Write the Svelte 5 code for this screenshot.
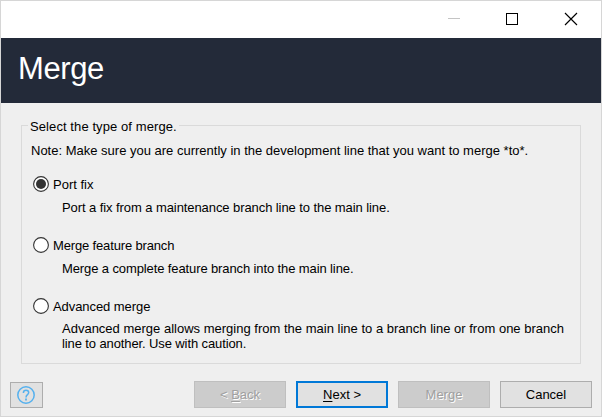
<script>
  let selected = $state('port');
  const options = [
    { id: 'port', label: 'Port fix', labelSpacing: 0, lines: [{ text: 'Port a fix from a maintenance branch line to the main line.', spacing: -0.08 }] },
    { id: 'feature', label: 'Merge feature branch', labelSpacing: -0.15, lines: [{ text: 'Merge a complete feature branch into the main line.', spacing: -0.11 }] },
    {
      id: 'advanced', label: 'Advanced merge', labelSpacing: -0.07,
      lines: [
        { text: 'Advanced merge allows merging from the main line to a branch line or from one branch', spacing: 0, justify: true },
        { text: 'line to another. Use with caution.', spacing: -0.11 }
      ]
    }
  ];
</script>

<div class="window">
  <div class="titlebar">
    <svg class="controls" width="146" height="37" viewBox="0 0 146 37" shape-rendering="crispEdges">
      <path d="M0 17.5H12" stroke="#c4c4c4" />
      <rect x="58.5" y="12.5" width="11" height="11" fill="none" stroke="#000" />
      <path d="M117 12L129 24M129 12L117 24" stroke="#000" stroke-width="1.15" shape-rendering="auto" />
    </svg>
  </div>
  <header><h1>Merge</h1></header>
  <main>
    <section class="group">
      <div class="legend-row"><span class="rule left"></span><span class="legend">Select the type of merge.</span><span class="rule"></span></div>
      <div class="body">
        <p class="note">Note: Make sure you are currently in the development line that you want to merge *to*.</p>
        {#each options as o}
          <div class="option">
            <label>
              <input type="radio" bind:group={selected} value={o.id} />
              <svg width="16" height="16" viewBox="0 0 16 16">
                <circle cx="8" cy="8" r="7.4" fill="#fff" stroke="#333" stroke-width="1.1" />
                {#if selected === o.id}<circle cx="8" cy="8" r="5" fill="#333" />{/if}
              </svg>
              <span style:letter-spacing="{o.labelSpacing}px">{o.label}</span>
            </label>
            <div class="desc" class:multi={o.lines.length > 1}>
              {#each o.lines as l}<p class:justify={l.justify} style:letter-spacing="{l.spacing}px">{l.text}</p>{/each}
            </div>
          </div>
        {/each}
      </div>
    </section>
    <footer>
      <button class="help" aria-label="Help">
        <svg width="18" height="18" viewBox="0 0 18 18" fill="none" stroke="#56b1ee">
          <circle cx="9" cy="9" r="8.2" stroke-width="1.5" />
          <path d="M6.4 6.9C6.4 5.2 7.5 4.3 9 4.3S11.7 5.2 11.7 6.6C11.7 8.6 9 8.7 9 11.4" stroke-width="1.5" />
          <path d="M9 12.5V14.4" stroke-width="1.8" />
        </svg>
      </button>
      <div class="actions">
        <button disabled>&lt; <u>B</u>ack</button>
        <button class="primary"><u>N</u>ext &gt;</button>
        <button disabled>Merge</button>
        <button>Cancel</button>
      </div>
    </footer>
  </main>
</div>

<style>
  .window { box-sizing: border-box; width: 602px; height: 417px; display: flex; flex-direction: column; border: 1px solid #d6d6d6; background: #efefef; color: #000; font: 13px/15px "Liberation Sans", Arial, sans-serif; }
  .window * { box-sizing: border-box; }
  .titlebar { height: 37px; background: #fff; display: flex; justify-content: flex-end; padding-right: 7px; }
  .controls { display: block; }
  header { height: 65px; background: #232a39; color: #fff; padding: 13px 0 0 17px; }
  h1 { margin: 0; font-size: 31px; line-height: 36px; font-weight: 400; letter-spacing: -0.4px; }
  main { flex: 1; padding: 16px 20px 0; }
  .group { height: 245px; display: flex; flex-direction: column; }
  .legend-row { height: 15px; display: flex; white-space: nowrap; }
  .rule { flex: 1; margin-top: 6px; height: 9px; border-top: 1px solid #dadada; border-right: 1px solid #dadada; }
  .rule.left { flex: 0 0 7px; border-right: 0; border-left: 1px solid #dadada; }
  .legend { padding: 0 2px; width: 151px; letter-spacing: 0.09px; }
  .body { flex: 1; border: 1px solid #dadada; border-top: 0; padding: 9px 16px 0 9px; }
  p { margin: 0; white-space: nowrap; }
  .option { height: 61px; padding-left: 2px; }
  .note { margin-bottom: 18px; }
  label { height: 16px; display: flex; }
  label svg { flex: none; }
  label span { margin: 1px 0 0 4px; }
  input { appearance: none; width: 0; height: 0; margin: 0; }
  .desc { padding: 8px 0 0 29px; }
  .desc.multi { padding-top: 7px; }
  .justify { text-align-last: justify; }
  footer { display: flex; justify-content: space-between; margin: 17px -11px 0 -11px; }
  button { width: 92px; height: 27px; padding: 0; border: 1px solid #adadad; background: #e1e1e1; color: #000; font: inherit; }
  .actions { display: flex; gap: 10px; }
  .help { width: 33px; height: 26px; margin-top: 1px; padding-right: 1px; display: flex; align-items: center; justify-content: center; }
  .primary { border: 2px solid #0078d7; }
  button:disabled { background: #ccc; border-color: #bfbfbf; color: #a0a0a0; text-shadow: 1px 1px #fff; }
  u { text-decoration-thickness: 1px; text-underline-offset: 2px; }
</style>
